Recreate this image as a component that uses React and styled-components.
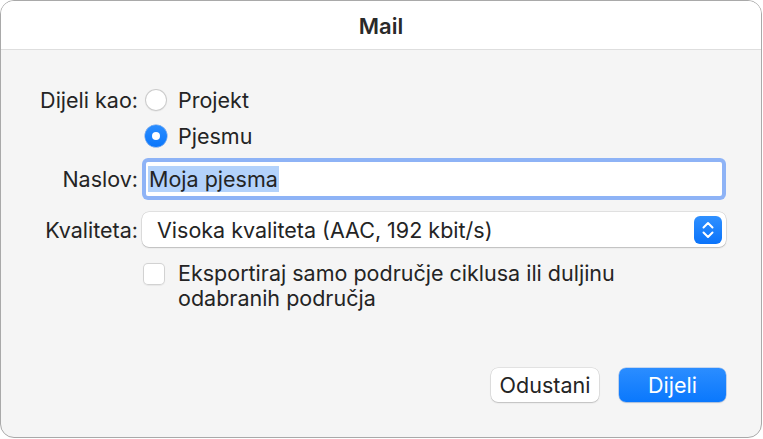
import styled, { createGlobalStyle } from "styled-components";

const Global = createGlobalStyle`
  html, body {
    margin: 0;
    padding: 0;
    background: #ffffff;
  }
  * { box-sizing: border-box; }
`;

const Window = styled.div`
  width: 762px;
  height: 438px;
  border: 1px solid #a9a9a9;
  border-radius: 14px;
  overflow: hidden;
  background: #f5f5f5;
  display: flex;
  flex-direction: column;
  font-family: Inter, "Noto Sans", sans-serif;
  font-size: 21.5px;
  color: #242424;
`;

const TitleBar = styled.div`
  height: 49px;
  flex: none;
  background: #ffffff;
  border-bottom: 1px solid #dedede;
  display: flex;
  align-items: center;
  justify-content: center;
  font-weight: 600;
  font-size: 22px;
  color: #2a2a2a;
  padding-top: 1px;
`;

const Body = styled.div`
  flex: 1;
  display: flex;
  flex-direction: column;
  padding: 37px 35px 35px 0;
`;

const Row = styled.div`
  display: grid;
  grid-template-columns: 133px 1fr;
  column-gap: 8px;
  align-items: ${(p) => (p.$top ? "start" : "center")};
  margin-top: ${(p) => p.$mt || 0}px;
  min-height: ${(p) => p.$h || 26}px;
`;

const Label = styled.div`
  text-align: right;
  white-space: nowrap;
  margin-right: -4px;
`;

const Option = styled.label`
  display: flex;
  align-items: center;
  gap: 11px;
  padding-left: 3px;
`;

const Radio = styled.span`
  width: 22px;
  height: 22px;
  border-radius: 50%;
  flex: none;
  display: flex;
  align-items: center;
  justify-content: center;
  background: ${(p) => (p.$on ? "linear-gradient(#2a8dff, #0a76fb)" : "#ffffff")};
  box-shadow: ${(p) =>
    p.$on
      ? "0 0 0 0.5px rgba(0,90,220,0.6)"
      : "inset 0 0 0 1px #cbcbcb, 0 0.5px 1px rgba(0,0,0,0.08)"};
  &::after {
    content: "";
    display: ${(p) => (p.$on ? "block" : "none")};
    width: 8px;
    height: 8px;
    border-radius: 50%;
    background: #ffffff;
  }
`;

const FocusRing = styled.div`
  height: 42px;
  border-radius: 6px;
  background: #ffffff;
  box-shadow: inset 0 0 0 4px #8eb3f6;
  padding: 0 8px 0 6px;
  display: flex;
  align-items: center;
`;

const Selected = styled.span`
  background: #b3d2fb;
  padding: 0 1px;
  line-height: 26px;
`;

const Popup = styled.div`
  height: 35px;
  border-radius: 7px;
  background: #ffffff;
  box-shadow: 0 0 0 0.5px rgba(0, 0, 0, 0.16), 0 1px 1.5px rgba(0, 0, 0, 0.16);
  display: flex;
  align-items: center;
  justify-content: space-between;
  padding: 0 4px 0 15px;
`;

const Stepper = styled.div`
  width: 28px;
  height: 28px;
  border-radius: 6px;
  background: linear-gradient(#2f90ff, #0a73fa);
  display: flex;
  align-items: center;
  justify-content: center;
`;

const Check = styled.span`
  width: 22px;
  height: 22px;
  flex: none;
  border-radius: 5px;
  background: #ffffff;
  box-shadow: inset 0 0 0 1px #d2d2d2, 0 0.5px 1px rgba(0, 0, 0, 0.06);
  margin-top: 2px;
`;

const CheckOption = styled.label`
  display: flex;
  align-items: flex-start;
  gap: 13px;
  padding-left: 1px;
  line-height: 25px;
`;

const Footer = styled.div`
  margin-top: auto;
  display: flex;
  justify-content: flex-end;
  gap: 20px;
`;

const Button = styled.button`
  width: ${(p) => p.$w}px;
  height: 34px;
  border: none;
  border-radius: 7px;
  font-family: inherit;
  font-size: 21.5px;
  background: ${(p) => (p.$primary ? "linear-gradient(#2b8dff, #0a78fd)" : "#ffffff")};
  color: ${(p) => (p.$primary ? "#ffffff" : "#242424")};
  box-shadow: ${(p) =>
    p.$primary
      ? "0 0 0 0.5px rgba(0,90,220,0.4), 0 1px 1.5px rgba(0,0,0,0.12)"
      : "0 0 0 0.5px rgba(0,0,0,0.14), 0 1px 1.5px rgba(0,0,0,0.16)"};
  padding: 0;
`;

const Chevrons = () => (
  <svg width="14" height="20" viewBox="0 0 14 20" fill="none">
    <path
      d="M2.5 7.5 L7 3 L11.5 7.5"
      stroke="#fff"
      strokeWidth="2"
      strokeLinecap="round"
      strokeLinejoin="round"
    />
    <path
      d="M2.5 12.5 L7 17 L11.5 12.5"
      stroke="#fff"
      strokeWidth="2"
      strokeLinecap="round"
      strokeLinejoin="round"
    />
  </svg>
);

export default function App() {
  return (
    <>
      <Global />
      <Window>
        <TitleBar>Mail</TitleBar>
        <Body>
          <Row>
            <Label>Dijeli kao:</Label>
            <Option>
              <Radio />
              Projekt
            </Option>
          </Row>
          <Row $mt={10}>
            <span />
            <Option>
              <Radio $on />
              Pjesmu
            </Option>
          </Row>
          <Row $mt={9} $h={42}>
            <Label>Naslov:</Label>
            <FocusRing>
              <Selected>Moja pjesma</Selected>
            </FocusRing>
          </Row>
          <Row $mt={12} $h={35}>
            <Label>Kvaliteta:</Label>
            <Popup>
              <span>Visoka kvaliteta (AAC, 192 kbit/s)</span>
              <Stepper>
                <Chevrons />
              </Stepper>
            </Popup>
          </Row>
          <Row $mt={14} $top>
            <span />
            <CheckOption>
              <Check />
              <span>
                Eksportiraj samo područje ciklusa ili duljinu
                <br />
                odabranih područja
              </span>
            </CheckOption>
          </Row>
          <Footer>
            <Button $w={108}>Odustani</Button>
            <Button $w={107} $primary>
              Dijeli
            </Button>
          </Footer>
        </Body>
      </Window>
    </>
  );
}
